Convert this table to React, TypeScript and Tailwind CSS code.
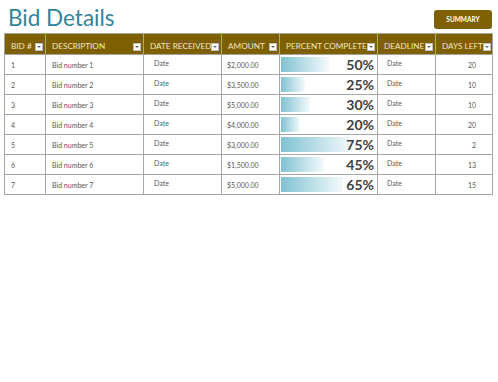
import React from "react";

type Bid = {
  id: number;
  desc: string;
  amount: string;
  pct: number;
  days: number;
};

const bids: Bid[] = [
  { id: 1, desc: "Bid number 1", amount: "$2,000.00", pct: 50, days: 20 },
  { id: 2, desc: "Bid number 2", amount: "$3,500.00", pct: 25, days: 10 },
  { id: 3, desc: "Bid number 3", amount: "$5,000.00", pct: 30, days: 10 },
  { id: 4, desc: "Bid number 4", amount: "$4,000.00", pct: 20, days: 20 },
  { id: 5, desc: "Bid number 5", amount: "$3,000.00", pct: 75, days: 2 },
  { id: 6, desc: "Bid number 6", amount: "$1,500.00", pct: 45, days: 13 },
  { id: 7, desc: "Bid number 7", amount: "$5,000.00", pct: 65, days: 15 },
];

const cols = "grid-cols-[41px_98px_78px_58px_98px_58px_56px]";

function FilterBtn() {
  return (
    <span className="flex h-[8px] w-[8px] shrink-0 items-center justify-center border border-[#bfbfbf] bg-white">
      <span className="h-0 w-0 border-x-[2px] border-t-[2px] border-x-transparent border-t-[#666]" />
    </span>
  );
}

function Head({ label }: { label: string }) {
  return (
    <div className="flex items-center justify-between border-r border-[#a6a6a6] pl-[6px] pr-[2px] pt-[5px] last:border-r-0">
      <span className="whitespace-nowrap text-[8.2px] text-[#f2e6c9]">{label}</span>
      <FilterBtn />
    </div>
  );
}

export default function App() {
  return (
    <div className="h-[382px] w-[498px] bg-white font-['Lato',sans-serif]">
      <div className="flex items-start justify-between pl-[8px] pr-[6px] pt-[3px]">
        <h1 className="text-[22.5px] leading-[30px] text-[#31849b]">Bid Details</h1>
        <button className="mt-[7px] h-[19px] w-[58px] rounded-[3px] bg-[#7f6000] text-[6.5px] font-bold text-white">
          SUMMARY
        </button>
      </div>

      <div className="ml-[4px] w-[489px] border border-[#a6a6a6]">
        <div className={`grid ${cols} h-[20px] bg-[#7f6000]`}>
          <Head label="BID #" />
          <Head label="DESCRIPTION" />
          <Head label="DATE RECEIVED" />
          <Head label="AMOUNT" />
          <Head label="PERCENT COMPLETE" />
          <Head label="DEADLINE" />
          <Head label="DAYS LEFT" />
        </div>
        {bids.map((b) => (
          <div
            key={b.id}
            className={`grid ${cols} h-[20px] border-t border-[#a6a6a6] text-[7px] text-[#595959]`}
          >
            <div className="flex items-center border-r border-[#a6a6a6] pl-[6px] pt-[1px]">{b.id}</div>
            <div className="flex items-center border-r border-[#a6a6a6] pl-[6px] pt-[1px]">{b.desc}</div>
            <div className="flex items-start border-r border-[#a6a6a6] pl-[10px] pt-[3px]">Date</div>
            <div className="flex items-center border-r border-[#a6a6a6] pl-[5px] pt-[1px]">{b.amount}</div>
            <div className="relative flex items-center justify-end border-r border-[#a6a6a6] pr-[3px]">
              <div
                className="absolute bottom-[2px] left-[1px] top-[2px] bg-gradient-to-r from-[#7fc2d3] to-[#f4fafc]"
                style={{ width: `${b.pct * 0.96}px` }}
              />
              <span className="relative text-[14px] font-bold leading-none text-[#404040]">{b.pct}%</span>
            </div>
            <div className="flex items-start border-r border-[#a6a6a6] pl-[9px] pt-[3px]">Date</div>
            <div className="flex items-center justify-end pr-[16px] pt-[1px]">{b.days}</div>
          </div>
        ))}
      </div>
    </div>
  );
}
